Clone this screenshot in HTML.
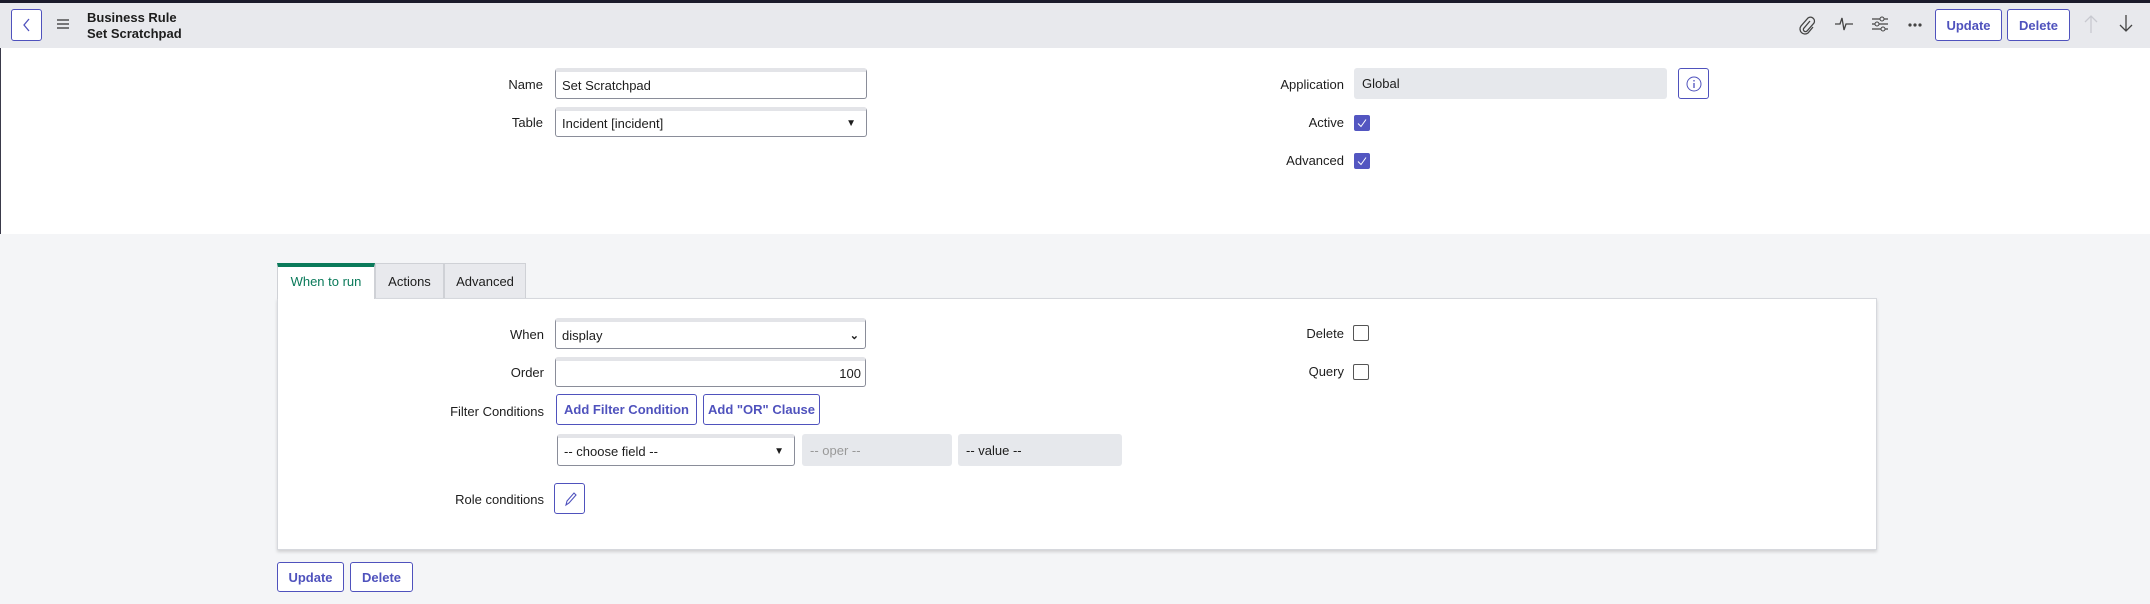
<!DOCTYPE html>
<html><head><meta charset="utf-8"><style>
*{box-sizing:border-box;margin:0;padding:0}
body{width:2150px;height:604px;overflow:hidden;background:#f4f5f7;font-family:"Liberation Sans",sans-serif;font-size:13px;color:#1d1d1d;position:relative}
.a{position:absolute}
.top{left:0;top:0;width:2150px;height:3px;background:#1b1b2b}
.hdr{left:0;top:3px;width:2150px;height:45px;background:#e8e9ed}
.white{left:0;top:48px;width:2150px;height:186px;background:#fff;border-left:1px solid #3a3a4a}
.btn{position:absolute;border:1px solid #4f52bd;border-radius:3px;background:#fff;color:#4f52bd;font-weight:bold;font-size:13px;display:flex;align-items:center;justify-content:center}
.inp{position:absolute;border:1px solid #8a8d99;border-top:4px solid #e3e4e8;border-radius:3px;background:#fff;padding-left:6px;display:flex;align-items:center;font-size:13px}
.ro{position:absolute;background:#e6e8ec;border-radius:3px;padding-left:8px;display:flex;align-items:center}
.lbl{position:absolute;text-align:right;font-size:13px}
.cb{position:absolute;width:16px;height:16px;background:#5356c1;border-radius:2px}
.cbe{position:absolute;width:16px;height:16px;border:1px solid #555;border-radius:2px;background:#fff}
.tab{position:absolute;top:263px;height:35px;background:#e8e9ed;border:1px solid #cfd1d6;border-bottom:none;display:flex;align-items:center;justify-content:center;font-size:13px}
</style></head><body>
<div class="a top"></div>
<div class="a hdr"></div>
<div class="btn" style="left:11px;top:9px;width:31px;height:32px"><svg width="12" height="16" viewBox="0 0 12 16"><path d="M8 2L3 8l5 6" fill="none" stroke="#4f52bd" stroke-width="1.3"/></svg></div>
<svg class="a" style="left:57px;top:19px" width="12" height="10"><path d="M0 1h12M0 5h12M0 9h12" stroke="#333" stroke-width="1.3"/></svg>
<div class="a" style="left:87px;top:10px;font-weight:bold;font-size:13px;line-height:16px">Business Rule<br>Set Scratchpad</div>
<svg class="a" style="left:1798px;top:15px" width="18" height="20" viewBox="0 0 18 20"><path d="M12 6l-6 7a2 2 0 0 0 3 3l7-8a4 4 0 0 0-6-5l-7 8a5 5 0 0 0 7 7l5-6" fill="none" stroke="#444" stroke-width="1.3"/></svg>
<svg class="a" style="left:1835px;top:15px" width="18" height="18"><path d="M0 9h5l2-6 2 12 2-6h7" fill="none" stroke="#444" stroke-width="1.3"/></svg>
<svg class="a" style="left:1871px;top:16px" width="18" height="16"><path d="M1 3h16M1 8h16M1 13h16" stroke="#444" stroke-width="1.2"/><circle cx="11" cy="3" r="2" fill="#e8e9ed" stroke="#444"/><circle cx="6" cy="8" r="2" fill="#e8e9ed" stroke="#444"/><circle cx="12" cy="13" r="2" fill="#e8e9ed" stroke="#444"/></svg>
<svg class="a" style="left:1908px;top:23px" width="14" height="4"><circle cx="2" cy="2" r="1.6" fill="#444"/><circle cx="7" cy="2" r="1.6" fill="#444"/><circle cx="12" cy="2" r="1.6" fill="#444"/></svg>
<div class="btn" style="left:1935px;top:9px;width:67px;height:32px">Update</div>
<div class="btn" style="left:2007px;top:9px;width:63px;height:32px">Delete</div>
<svg class="a" style="left:2084px;top:15px" width="14" height="18"><path d="M7 1v17M1 7l6-6 6 6" fill="none" stroke="#c8c9d0" stroke-width="1.3"/></svg>
<svg class="a" style="left:2119px;top:15px" width="14" height="18"><path d="M7 0v16M1 10l6 6 6-6" fill="none" stroke="#444" stroke-width="1.3"/></svg>

<div class="a white"></div>
<div class="lbl" style="left:400px;width:143px;top:77px">Name</div>
<div class="inp" style="left:555px;top:68px;width:312px;height:31px">Set Scratchpad</div>
<div class="lbl" style="left:400px;width:143px;top:115px">Table</div>
<div class="inp" style="left:555px;top:107px;width:312px;height:30px">Incident [incident]<span style="position:absolute;right:10px;font-size:10px">▼</span></div>
<div class="lbl" style="left:1200px;width:144px;top:77px">Application</div>
<div class="ro" style="left:1354px;top:68px;width:313px;height:31px">Global</div>
<div class="btn" style="left:1678px;top:68px;width:31px;height:31px"><svg width="16" height="16"><circle cx="8" cy="8" r="7" fill="none" stroke="#4f52bd"/><path d="M8 7v5M8 4v1.5" stroke="#4f52bd" stroke-width="1.3"/></svg></div>
<div class="lbl" style="left:1200px;width:144px;top:115px">Active</div>
<div class="cb" style="left:1354px;top:115px"><svg width="16" height="16"><path d="M4 8.5l3 3 5-7" fill="none" stroke="#fff" stroke-width="1"/></svg></div>
<div class="lbl" style="left:1200px;width:144px;top:153px">Advanced</div>
<div class="cb" style="left:1354px;top:153px"><svg width="16" height="16"><path d="M4 8.5l3 3 5-7" fill="none" stroke="#fff" stroke-width="1"/></svg></div>

<div class="tab" style="left:277px;width:98px;background:#fff;border-top:4px solid #0a7a5a;color:#0a7a5a;z-index:2;height:36px;padding-bottom:4px">When to run</div>
<div class="tab" style="left:375px;width:69px">Actions</div>
<div class="tab" style="left:444px;width:82px">Advanced</div>
<div class="a" style="left:277px;top:298px;width:1600px;height:252px;background:#fff;border:1px solid #d6d8dd;box-shadow:0 2px 3px rgba(0,0,0,.15)"></div>
<div class="lbl" style="left:400px;width:144px;top:327px">When</div>
<div class="inp" style="left:555px;top:318px;width:311px;height:31px">display<span style="position:absolute;right:6px;font-weight:bold;font-size:11px">⌄</span></div>
<div class="lbl" style="left:400px;width:144px;top:365px">Order</div>
<div class="inp" style="left:555px;top:357px;width:311px;height:30px;justify-content:flex-end;padding-right:4px">100</div>
<div class="lbl" style="left:400px;width:144px;top:404px">Filter Conditions</div>
<div class="btn" style="left:556px;top:394px;width:141px;height:31px">Add Filter Condition</div>
<div class="btn" style="left:703px;top:394px;width:117px;height:31px">Add "OR" Clause</div>
<div class="inp" style="left:557px;top:434px;width:238px;height:32px;border-top-width:4px">-- choose field --<span style="position:absolute;right:10px;font-size:10px">▼</span></div>
<div class="ro" style="left:802px;top:434px;width:150px;height:32px;color:#999">-- oper --</div>
<div class="ro" style="left:958px;top:434px;width:164px;height:32px">-- value --</div>
<div class="lbl" style="left:400px;width:144px;top:492px">Role conditions</div>
<div class="btn" style="left:554px;top:483px;width:31px;height:31px"><svg width="14" height="16"><path d="M3 14l1-4 7-8 2 2-7 8z" fill="none" stroke="#4f52bd" stroke-width="1.1"/></svg></div>
<div class="lbl" style="left:1200px;width:144px;top:326px">Delete</div>
<div class="cbe" style="left:1353px;top:325px"></div>
<div class="lbl" style="left:1200px;width:144px;top:364px">Query</div>
<div class="cbe" style="left:1353px;top:364px"></div>

<div class="btn" style="left:277px;top:562px;width:67px;height:30px">Update</div>
<div class="btn" style="left:350px;top:562px;width:63px;height:30px">Delete</div>
</body></html>
